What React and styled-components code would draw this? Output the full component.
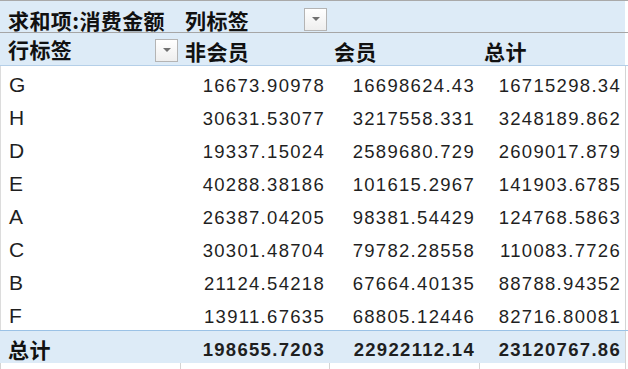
import styled, { createGlobalStyle } from "styled-components";

const GlobalStyle = createGlobalStyle`
  html, body {
    margin: 0;
    padding: 0;
    background: #ffffff;
    overflow: hidden;
  }
`;

const cols = "180px 149px 150px 146px 3px";

const Sheet = styled.div`
  width: 628px;
  height: 369px;
  overflow: hidden;
  font-family: "Liberation Sans", "Noto Sans CJK SC", sans-serif;
  color: #1f1f1f;
`;

const Row = styled.div`
  display: grid;
  grid-template-columns: ${cols};
  height: 33px;
  box-sizing: border-box;
  background: ${(p) => (p.$tone === "data" ? "#ffffff" : "#ddebf7")};
  border-top: ${(p) => (p.$top ? `1px solid ${p.$top}` : "none")};
  border-bottom: ${(p) => (p.$bottom ? `1px solid ${p.$bottom}` : "none")};
  font-weight: ${(p) => (p.$tone === "total" ? 700 : 400)};
`;

const Cell = styled.div`
  display: flex;
  align-items: flex-end;
  justify-content: ${(p) => (p.$num ? "flex-end" : "flex-start")};
  gap: 6px;
  padding: 0 ${(p) => (p.$num ? "4px" : "5px")} ${(p) => (p.$low ? "2px" : "4px")}
    ${(p) => (p.$first ? "8px" : "5px")};
  box-sizing: border-box;
  min-width: 0;
  white-space: nowrap;
  font-size: ${(p) => (p.$num ? "18.5px" : "21px")};
  letter-spacing: ${(p) => (p.$num ? "1.3px" : "0")};
  line-height: 1;
  border-left: ${(p) => (p.$grid ? "1px solid #dcdcdc" : "none")};
`;

const HeadText = styled.span`
  font-family: "Noto Sans CJK SC", sans-serif;
  font-weight: 700;
  font-size: 21px;
  letter-spacing: 0.4px;
  color: #111111;
  margin-bottom: -1px;
`;

const Split = styled(Cell)`
  justify-content: space-between;
  align-items: center;
  padding-right: 2px;
  padding-bottom: 0;
`;

const Drop = styled.span`
  width: 23px;
  height: 23px;
  box-sizing: border-box;
  border: 1px solid #b4b4b4;
  background: linear-gradient(#ffffff, #eeeeee);
  display: flex;
  align-items: center;
  justify-content: center;
  margin-top: ${(p) => p.$shift || 0}px;

  &::after {
    content: "";
    border-top: 4px solid #707070;
    border-left: 4px solid transparent;
    border-right: 4px solid transparent;
  }
`;

const Edge = styled.div`
  background: #ffffff;
  border-left: 1px solid ${(p) => (p.$line ? "#d4d4d4" : "transparent")};
`;

const Foot = styled.div`
  display: grid;
  grid-template-columns: ${cols};
  height: 6px;
`;

const FootCell = styled.div`
  border-left: 1px solid #d4d4d4;
`;

const rows = [
  ["G", "16673.90978", "16698624.43", "16715298.34"],
  ["H", "30631.53077", "3217558.331", "3248189.862"],
  ["D", "19337.15024", "2589680.729", "2609017.879"],
  ["E", "40288.38186", "101615.2967", "141903.6785"],
  ["A", "26387.04205", "98381.54429", "124768.5863"],
  ["C", "30301.48704", "79782.28558", "110083.7726"],
  ["B", "21124.54218", "67664.40135", "88788.94352"],
  ["F", "13911.67635", "68805.12446", "82716.80081"],
];

const App = () => {
  return (
    <Sheet>
      <GlobalStyle />
      <Row $tone="head" $top="#a9a9a9" $bottom="#a6a6a6">
        <Cell $first $low>
          <HeadText>求和项:消费金额</HeadText>
        </Cell>
        <Split>
          <HeadText style={{ marginTop: 6 }}>列标签</HeadText>
          <Drop $shift={5} />
        </Split>
        <Cell />
        <Cell />
        <Edge />
      </Row>
      <Row $tone="head" $bottom="#b4cfe8">
        <Split $first>
          <HeadText>行标签</HeadText>
          <Drop $shift={2} />
        </Split>
        <Cell>
          <HeadText>非会员</HeadText>
        </Cell>
        <Cell>
          <HeadText>会员</HeadText>
        </Cell>
        <Cell>
          <HeadText>总计</HeadText>
        </Cell>
        <Edge />
      </Row>
      {rows.map(([label, a, b, c]) => (
        <Row key={label} $tone="data">
          <Cell $first $grid>
            {label}
          </Cell>
          <Cell $num>{a}</Cell>
          <Cell $num>{b}</Cell>
          <Cell $num>{c}</Cell>
          <Edge $line />
        </Row>
      ))}
      <Row $tone="total" $top="#9bc2e6">
        <Cell $first>
          <HeadText>总计</HeadText>
        </Cell>
        <Cell $num>198655.7203</Cell>
        <Cell $num>22922112.14</Cell>
        <Cell $num>23120767.86</Cell>
        <Edge $line />
      </Row>
      <Foot>
        <FootCell />
        <FootCell />
        <FootCell />
        <FootCell />
        <FootCell />
      </Foot>
    </Sheet>
  );
};

export default App;
